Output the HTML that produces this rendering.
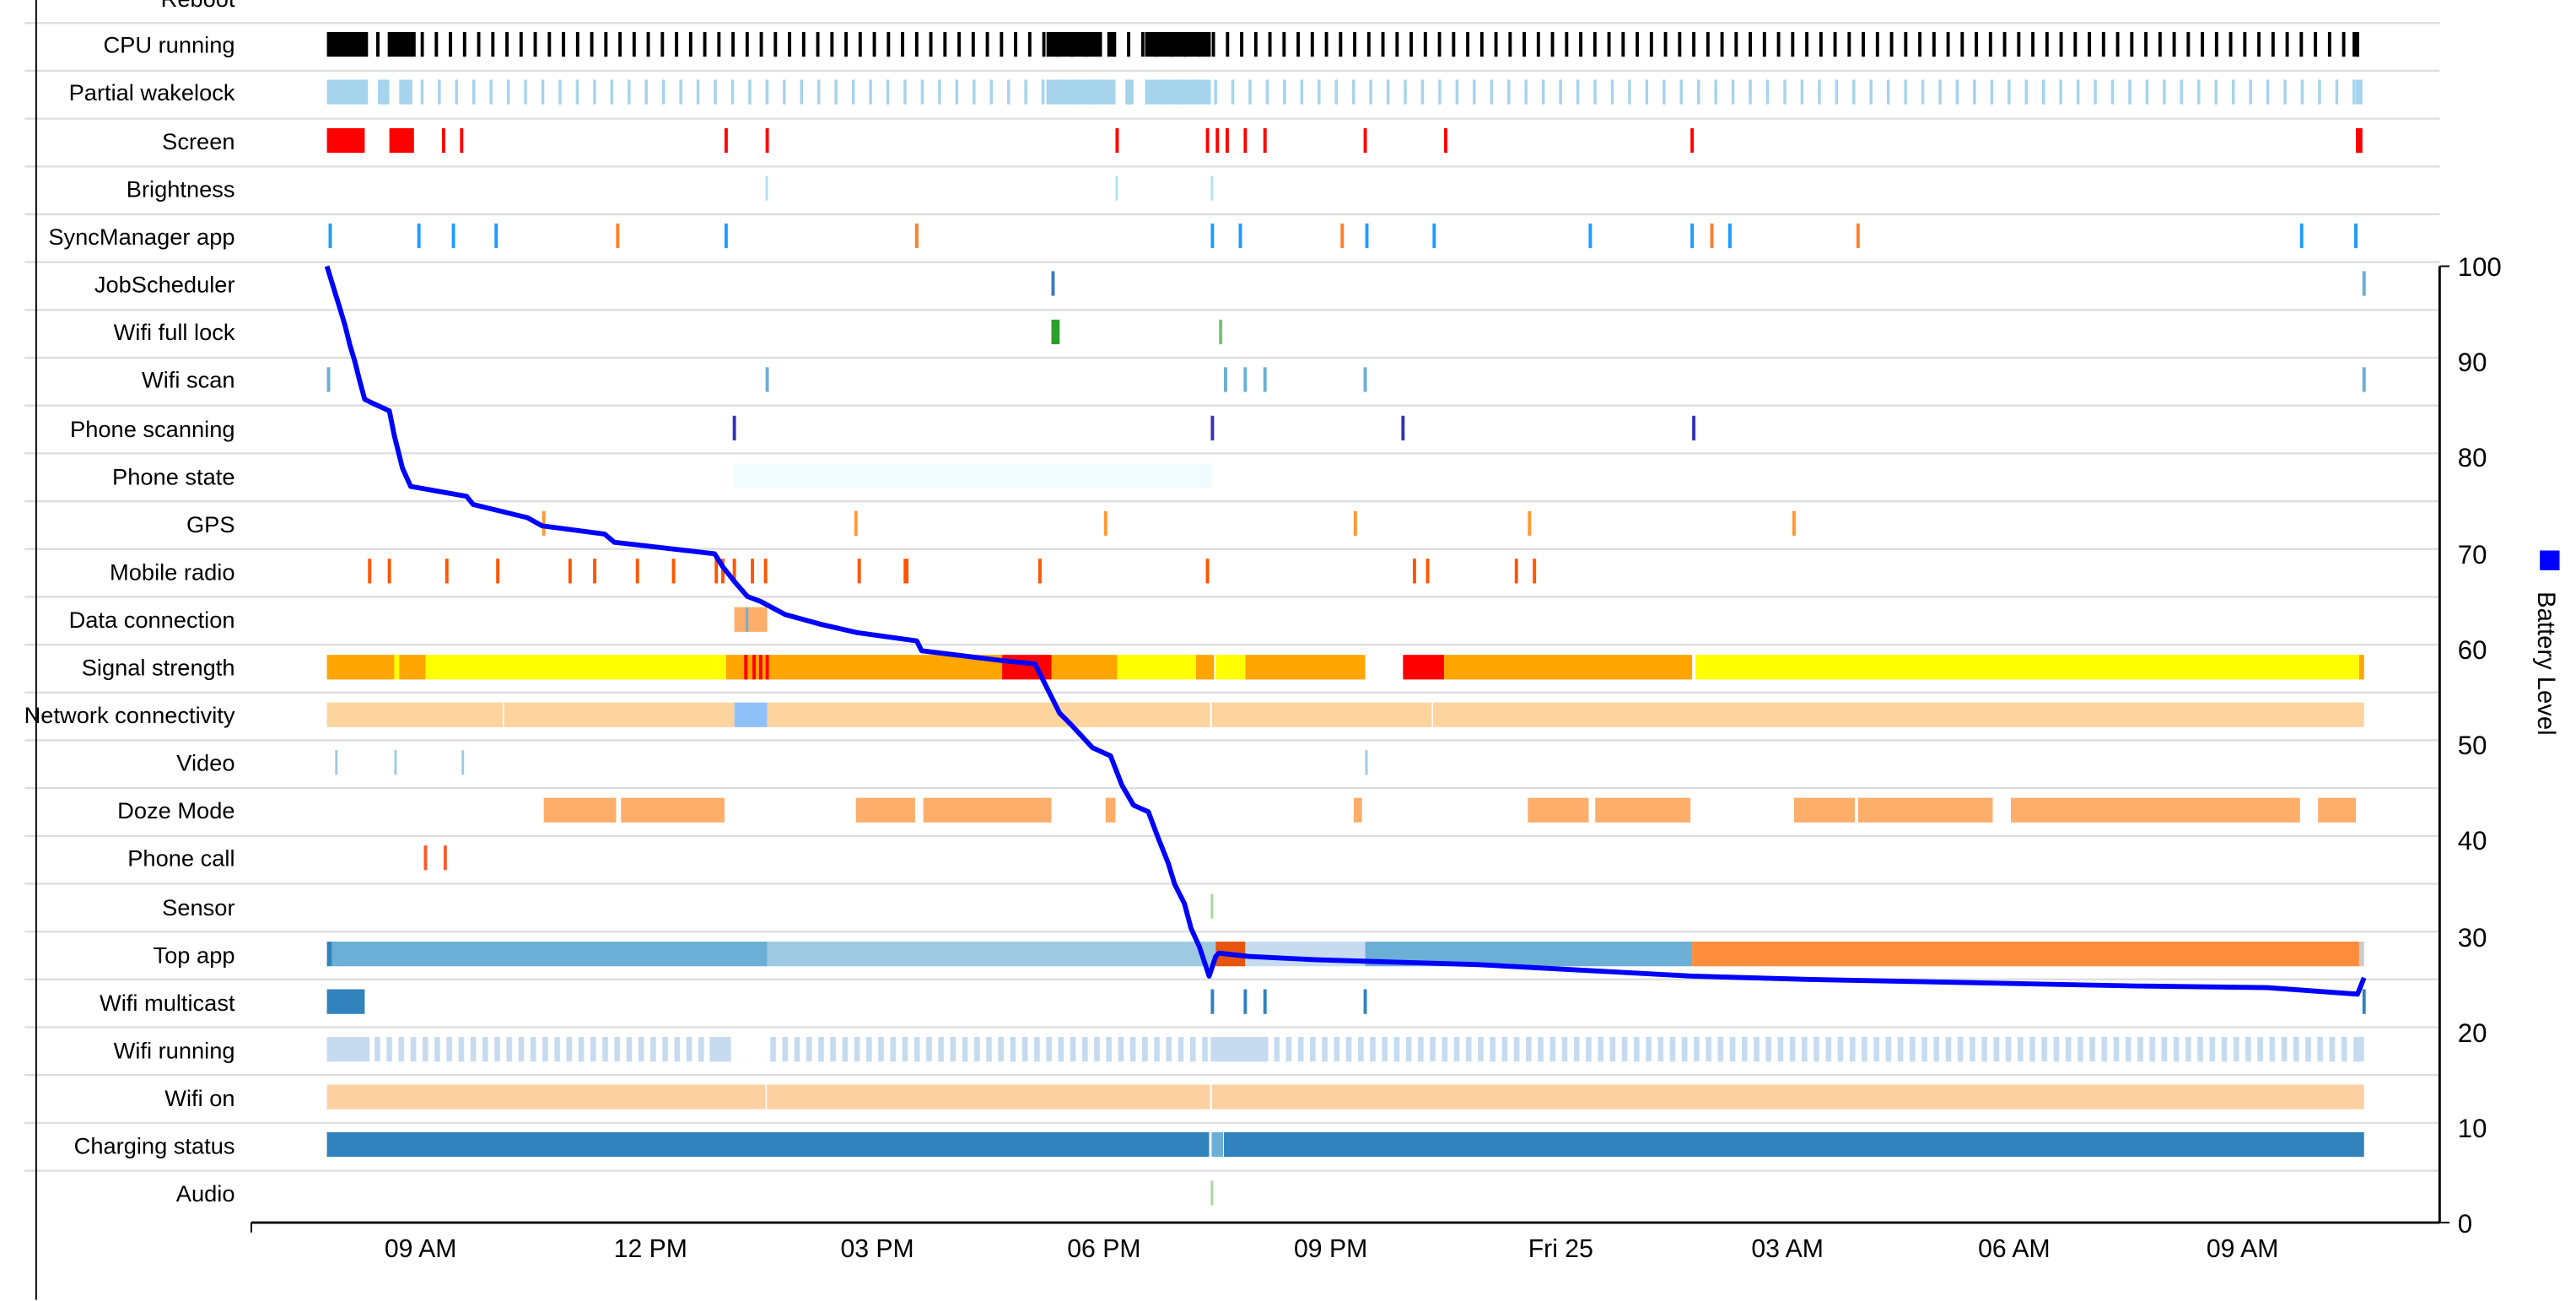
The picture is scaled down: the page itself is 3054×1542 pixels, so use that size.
<!DOCTYPE html>
<html><head><meta charset="utf-8"><style>html,body{margin:0;padding:0;background:#fff;overflow:hidden}svg{display:block}</style></head><body>
<svg width="3054" height="1542" viewBox="0 0 1568 791.7" preserveAspectRatio="none" xmlns="http://www.w3.org/2000/svg" font-family="Liberation Sans, sans-serif">
<defs>
<pattern id="cpu" x="256" y="0" width="8.6" height="10" patternUnits="userSpaceOnUse"><rect x="0" y="0" width="2" height="10" fill="#000"/></pattern>
<pattern id="pw" x="256" y="0" width="10.5" height="10" patternUnits="userSpaceOnUse"><rect x="0" y="0" width="1.8" height="10" fill="#a6d4ec"/></pattern>
<pattern id="wr" x="228" y="0" width="7.3" height="10" patternUnits="userSpaceOnUse"><rect x="0" y="0" width="3.4" height="10" fill="#c6dbef"/></pattern>
</defs>
<g stroke="#ddd" stroke-width="1.2" transform="translate(0,1.5)">
<line x1="15" x2="1485" y1="12.5" y2="12.5"/><line x1="15" x2="1485" y1="41.6" y2="41.6"/><line x1="15" x2="1485" y1="70.7" y2="70.7"/><line x1="15" x2="1485" y1="99.8" y2="99.8"/><line x1="15" x2="1485" y1="128.9" y2="128.9"/><line x1="15" x2="1485" y1="158" y2="158"/><line x1="15" x2="1485" y1="187.1" y2="187.1"/><line x1="15" x2="1485" y1="216.2" y2="216.2"/><line x1="15" x2="1485" y1="245.3" y2="245.3"/><line x1="15" x2="1485" y1="274.4" y2="274.4"/><line x1="15" x2="1485" y1="303.5" y2="303.5"/><line x1="15" x2="1485" y1="332.6" y2="332.6"/><line x1="15" x2="1485" y1="361.7" y2="361.7"/><line x1="15" x2="1485" y1="390.8" y2="390.8"/><line x1="15" x2="1485" y1="419.9" y2="419.9"/><line x1="15" x2="1485" y1="449" y2="449"/><line x1="15" x2="1485" y1="478.1" y2="478.1"/><line x1="15" x2="1485" y1="507.2" y2="507.2"/><line x1="15" x2="1485" y1="536.3" y2="536.3"/><line x1="15" x2="1485" y1="565.4" y2="565.4"/><line x1="15" x2="1485" y1="594.5" y2="594.5"/><line x1="15" x2="1485" y1="623.6" y2="623.6"/><line x1="15" x2="1485" y1="652.7" y2="652.7"/><line x1="15" x2="1485" y1="681.8" y2="681.8"/><line x1="15" x2="1485" y1="710.9" y2="710.9"/>
</g>
<g font-size="14" text-anchor="end" fill="#000">
<text x="143" y="4">Reboot</text><text x="143" y="32">CPU running</text><text x="143" y="61">Partial wakelock</text><text x="143" y="91">Screen</text><text x="143" y="120">Brightness</text><text x="143" y="149">SyncManager app</text><text x="143" y="178">JobScheduler</text><text x="143" y="207">Wifi full lock</text><text x="143" y="236">Wifi scan</text><text x="143" y="266">Phone scanning</text><text x="143" y="295">Phone state</text><text x="143" y="324">GPS</text><text x="143" y="353">Mobile radio</text><text x="143" y="382">Data connection</text><text x="143" y="411">Signal strength</text><text x="143" y="440">Network connectivity</text><text x="143" y="469">Video</text><text x="143" y="498">Doze Mode</text><text x="143" y="527">Phone call</text><text x="143" y="557">Sensor</text><text x="143" y="586">Top app</text><text x="143" y="615">Wifi multicast</text><text x="143" y="644">Wifi running</text><text x="143" y="673">Wifi on</text><text x="143" y="702">Charging status</text><text x="143" y="731">Audio</text>
</g>
<line x1="22" x2="22" y1="0" y2="791" stroke="#000" stroke-width="1"/>
<g fill="#000"><rect x="199" y="19.5" width="25" height="15"/><rect x="229" y="19.5" width="2" height="15"/><rect x="236" y="19.5" width="17" height="15"/><rect x="256" y="19.5" width="1180" height="15" fill="url(#cpu)"/><rect x="637" y="19.5" width="32" height="15"/><rect x="674" y="19.5" width="5" height="15"/><rect x="697" y="19.5" width="40" height="15"/><rect x="1432" y="19.5" width="4" height="15"/></g>
<g fill="#a6d4ec"><rect x="199" y="48.5" width="25" height="15"/><rect x="230" y="48.5" width="7" height="15"/><rect x="243" y="48.5" width="8" height="15"/><rect x="256" y="48.5" width="1182" height="15" fill="url(#pw)"/><rect x="637" y="48.5" width="42" height="15"/><rect x="685" y="48.5" width="5" height="15"/><rect x="697" y="48.5" width="40" height="15"/><rect x="1434" y="48.5" width="4" height="15"/></g>
<g fill="#f00"><rect x="199" y="78" width="23" height="15"/><rect x="237" y="78" width="15" height="15"/><rect x="269" y="78" width="2" height="15"/><rect x="280" y="78" width="2" height="15"/><rect x="441" y="78" width="2" height="15"/><rect x="466" y="78" width="2" height="15"/><rect x="679" y="78" width="2" height="15"/><rect x="734" y="78" width="2" height="15"/><rect x="740" y="78" width="2" height="15"/><rect x="746" y="78" width="2" height="15"/><rect x="757" y="78" width="2" height="15"/><rect x="769" y="78" width="2" height="15"/><rect x="830" y="78" width="2" height="15"/><rect x="879" y="78" width="2" height="15"/><rect x="1029" y="78" width="2" height="15"/><rect x="1434" y="78" width="4" height="15"/></g>
<g fill="#b3e0ee"><rect x="466" y="107" width="1.5" height="15"/><rect x="679" y="107" width="1.5" height="15"/><rect x="737" y="107" width="1.5" height="15"/></g>
<g fill="#1f9bff"><rect x="200" y="136" width="2" height="15"/><rect x="254" y="136" width="2" height="15"/><rect x="275" y="136" width="2" height="15"/><rect x="301" y="136" width="2" height="15"/><rect x="441" y="136" width="2" height="15"/><rect x="737" y="136" width="2" height="15"/><rect x="754" y="136" width="2" height="15"/><rect x="831" y="136" width="2" height="15"/><rect x="872" y="136" width="2" height="15"/><rect x="967" y="136" width="2" height="15"/><rect x="1029" y="136" width="2" height="15"/><rect x="1052" y="136" width="2" height="15"/><rect x="1400" y="136" width="2" height="15"/><rect x="1433" y="136" width="2" height="15"/></g>
<g fill="#ff7f2a"><rect x="375" y="136" width="2" height="15"/><rect x="557" y="136" width="2" height="15"/><rect x="816" y="136" width="2" height="15"/><rect x="1041" y="136" width="2" height="15"/><rect x="1130" y="136" width="2" height="15"/></g>
<g fill="#3a7bbf"><rect x="640" y="165" width="2" height="15"/></g><rect x="1438" y="165" width="2" height="15" fill="#6baed6"/>
<rect x="640" y="194.5" width="5" height="15" fill="#2ca02c"/><rect x="742" y="194.5" width="2" height="15" fill="#74c476"/>
<g fill="#6baed6"><rect x="199" y="223.5" width="2" height="15"/><rect x="466" y="223.5" width="2" height="15"/><rect x="745" y="223.5" width="2" height="15"/><rect x="757" y="223.5" width="2" height="15"/><rect x="769" y="223.5" width="2" height="15"/><rect x="830" y="223.5" width="2" height="15"/><rect x="1438" y="223.5" width="2" height="15"/></g>
<g fill="#3333bb"><rect x="446" y="253" width="2" height="15"/><rect x="737" y="253" width="2" height="15"/><rect x="853" y="253" width="2" height="15"/><rect x="1030" y="253" width="2" height="15"/></g>
<rect x="447" y="282" width="291" height="15" fill="#f0fcff"/>
<g fill="#ff9933"><rect x="330" y="311" width="2" height="15"/><rect x="520" y="311" width="2" height="15"/><rect x="672" y="311" width="2" height="15"/><rect x="824" y="311" width="2" height="15"/><rect x="930" y="311" width="2" height="15"/><rect x="1091" y="311" width="2" height="15"/></g>
<g fill="#ff5500"><rect x="224" y="340" width="2" height="15"/><rect x="236" y="340" width="2" height="15"/><rect x="271" y="340" width="2" height="15"/><rect x="302" y="340" width="2" height="15"/><rect x="346" y="340" width="2" height="15"/><rect x="361" y="340" width="2" height="15"/><rect x="387" y="340" width="2" height="15"/><rect x="409" y="340" width="2" height="15"/><rect x="435" y="340" width="2" height="15"/><rect x="439" y="340" width="2" height="15"/><rect x="446" y="340" width="2" height="15"/><rect x="457" y="340" width="2" height="15"/><rect x="465" y="340" width="2" height="15"/><rect x="522" y="340" width="2" height="15"/><rect x="550" y="340" width="3" height="15"/><rect x="632" y="340" width="2" height="15"/><rect x="734" y="340" width="2" height="15"/><rect x="860" y="340" width="2" height="15"/><rect x="868" y="340" width="2" height="15"/><rect x="922" y="340" width="2" height="15"/><rect x="933" y="340" width="2" height="15"/></g>
<rect x="447" y="369.5" width="20" height="15" fill="#fdae6b"/><rect x="454" y="369.5" width="1.5" height="15" fill="#6baed6"/>
<g><rect x="199" y="398.5" width="41" height="15" fill="#ffa500"/><rect x="240" y="398.5" width="3" height="15" fill="#ff0"/><rect x="243" y="398.5" width="16" height="15" fill="#ffa500"/><rect x="259" y="398.5" width="183" height="15" fill="#ff0"/><rect x="442" y="398.5" width="26" height="15" fill="#ffa500"/><rect x="453" y="398.5" width="2" height="15" fill="#f00"/><rect x="458" y="398.5" width="2" height="15" fill="#f00"/><rect x="462" y="398.5" width="2" height="15" fill="#f00"/><rect x="466" y="398.5" width="2" height="15" fill="#f00"/><rect x="468" y="398.5" width="142" height="15" fill="#ffa500"/><rect x="610" y="398.5" width="30" height="15" fill="#f00"/><rect x="640" y="398.5" width="40" height="15" fill="#ffa500"/><rect x="680" y="398.5" width="48" height="15" fill="#ff0"/><rect x="728" y="398.5" width="11" height="15" fill="#ffa500"/><rect x="740" y="398.5" width="18" height="15" fill="#ff0"/><rect x="758" y="398.5" width="73" height="15" fill="#ffa500"/><rect x="854" y="398.5" width="25" height="15" fill="#f00"/><rect x="879" y="398.5" width="151" height="15" fill="#ffa500"/><rect x="1032" y="398.5" width="404" height="15" fill="#ff0"/><rect x="1436" y="398.5" width="3" height="15" fill="#ffa500"/></g>
<rect x="199" y="427.5" width="248" height="15" fill="#fdd49e"/><rect x="447" y="427.5" width="20" height="15" fill="#90c2f9"/><rect x="467" y="427.5" width="972" height="15" fill="#fdd49e"/><rect x="306" y="427.5" width="0.8" height="15" fill="#fff"/><rect x="736.5" y="427.5" width="1.2" height="15" fill="#fff"/><rect x="871.5" y="427.5" width="0.8" height="15" fill="#fff"/>
<g fill="#9ecae1"><rect x="204" y="456.5" width="1.5" height="15"/><rect x="240" y="456.5" width="1.5" height="15"/><rect x="281" y="456.5" width="1.5" height="15"/><rect x="831" y="456.5" width="1.5" height="15"/></g>
<g fill="#fdae6b"><rect x="331" y="485.5" width="44" height="15"/><rect x="378" y="485.5" width="63" height="15"/><rect x="521" y="485.5" width="36" height="15"/><rect x="562" y="485.5" width="78" height="15"/><rect x="673" y="485.5" width="6" height="15"/><rect x="824" y="485.5" width="5" height="15"/><rect x="930" y="485.5" width="37" height="15"/><rect x="971" y="485.5" width="58" height="15"/><rect x="1092" y="485.5" width="37" height="15"/><rect x="1131" y="485.5" width="82" height="15"/><rect x="1224" y="485.5" width="176" height="15"/><rect x="1411" y="485.5" width="23" height="15"/></g>
<g fill="#ff5a2a"><rect x="258" y="514.5" width="2" height="15"/><rect x="270" y="514.5" width="2" height="15"/></g>
<rect x="737" y="544" width="1.5" height="15" fill="#a1d99b"/>
<rect x="199" y="573" width="3" height="15" fill="#3182bd"/><rect x="202" y="573" width="265" height="15" fill="#6baed6"/><rect x="467" y="573" width="273" height="15" fill="#9ecae1"/><rect x="740" y="573" width="18" height="15" fill="#e6550d"/><rect x="758" y="573" width="73" height="15" fill="#c6dbef"/><rect x="831" y="573" width="199" height="15" fill="#6baed6"/><rect x="1030" y="573" width="406" height="15" fill="#fd8d3c"/><rect x="1436" y="573" width="3" height="15" fill="#ccc"/>
<g fill="#3182bd"><rect x="199" y="602" width="23" height="15"/><rect x="737" y="602" width="2" height="15"/><rect x="757" y="602" width="2" height="15"/><rect x="769" y="602" width="2" height="15"/><rect x="830" y="602" width="2" height="15"/><rect x="1438" y="602" width="2" height="15"/></g>
<g fill="#c6dbef"><rect x="199" y="631" width="26" height="15"/><rect x="228" y="631" width="1210" height="15" fill="url(#wr)"/><rect x="432" y="631" width="13" height="15"/><rect x="737" y="631" width="35" height="15"/><rect x="1434" y="631" width="5" height="15"/></g>
<rect x="446" y="631" width="20" height="15" fill="#fff"/>
<rect x="199" y="660" width="1240" height="15" fill="#fdd0a2"/><rect x="466" y="660" width="0.8" height="15" fill="#fff"/><rect x="736.5" y="660" width="1.3" height="15" fill="#fff"/>
<rect x="199" y="689" width="537" height="15" fill="#3182bd"/><rect x="737.5" y="689" width="7" height="15" fill="#6baed6"/><rect x="745" y="689" width="694" height="15" fill="#3182bd"/>
<rect x="737" y="718.5" width="1.5" height="15" fill="#a1d99b"/>
<polyline fill="none" stroke="#0000ff" stroke-width="3" stroke-linejoin="round" points="199,162 203,175 207,188 210,198 213,210 216,220 219,232 222,243 226,245 237,250 240,265 245,285 250,296 284,302 288,307 321,315 330,320 368,325 374,330 435,337 440,345 448,355 455,363 463,366 478,374 500,380 522,385 558,390 561,396 610,402 630,404 637,418 645,434 652,441 665,455 676,460 683,478 690,490 699,494 705,510 711,525 715,538 721,550 725,565 730,576 736,594 740,582 742,580 760,582 800,584 900,587 1030,594 1100,596 1200,598 1300,600 1380,601 1435,605 1439,595"/>
<line x1="153" x2="1485" y1="744" y2="744" stroke="#000" stroke-width="1.5"/>
<line x1="153" x2="153" y1="744" y2="750" stroke="#000" stroke-width="1"/>
<line x1="1485" x2="1485" y1="162" y2="744" stroke="#000" stroke-width="1.5"/>
<g stroke="#000" stroke-width="1"><line x1="1485" x2="1491" y1="162" y2="162"/><line x1="1485" x2="1491" y1="744" y2="744"/></g>
<g font-size="16" fill="#000"><text x="1496" y="168">100</text><text x="1496" y="226">90</text><text x="1496" y="284">80</text><text x="1496" y="343">70</text><text x="1496" y="401">60</text><text x="1496" y="459">50</text><text x="1496" y="517">40</text><text x="1496" y="576">30</text><text x="1496" y="634">20</text><text x="1496" y="692">10</text><text x="1496" y="750">0</text></g>
<g font-size="15.5" fill="#000" text-anchor="middle"><text x="256" y="765">09 AM</text><text x="396" y="765">12 PM</text><text x="534" y="765">03 PM</text><text x="672" y="765">06 PM</text><text x="810" y="765">09 PM</text><text x="950" y="765">Fri 25</text><text x="1088" y="765">03 AM</text><text x="1226" y="765">06 AM</text><text x="1365" y="765">09 AM</text></g>
<rect x="1546" y="335" width="12" height="12" fill="#0000ff"/>
<text transform="translate(1545,360) rotate(90)" font-size="15" fill="#000">Battery Level</text>
</svg>
</body></html>
